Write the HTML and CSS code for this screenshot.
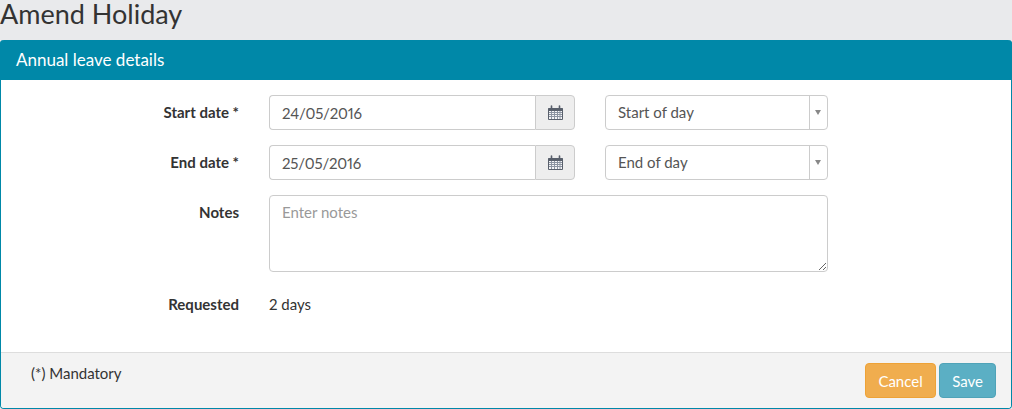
FILE: index.html
```html
<!DOCTYPE html>
<html lang="en">
  <head>
    <meta charset="UTF-8" />
    <meta name="viewport" content="width=device-width, initial-scale=1" />
    <title>Amend Holiday</title>
    <link rel="stylesheet" href="styles.css">
  </head>
  <body>
    <h1 class="page-title">Amend Holiday</h1>

    <main class="panel">
      <div class="panel-heading">Annual leave details</div>

      <form class="panel-body">
        <label class="form-label" for="start-date">Start date *</label>
        <div class="input-group">
          <input class="form-control" id="start-date" type="text" value="24/05/2016" />
          <span class="input-addon">
            <svg class="cal-icon" viewBox="0 0 15 15" aria-hidden="true">
              <path class="cal-body" d="M.5 3.5h14v11H.5z" />
              <path class="cal-grid" d="M1 7.5h13M1 9.5h13M1 11.5h13M3.5 6v8M6.5 6v8M9.5 6v8M12 6v8" />
              <path class="cal-top" d="M.5 3h14v3H.5z" />
              <path class="cal-ring" d="M3.5 1v3M11.5 1v3" />
            </svg>
          </span>
        </div>
        <div class="select-box">
          <span class="select-text">Start of day</span>
          <span class="select-arrow"></span>
        </div>

        <label class="form-label" for="end-date">End date *</label>
        <div class="input-group">
          <input class="form-control" id="end-date" type="text" value="25/05/2016" />
          <span class="input-addon">
            <svg class="cal-icon" viewBox="0 0 15 15" aria-hidden="true">
              <path class="cal-body" d="M.5 3.5h14v11H.5z" />
              <path class="cal-grid" d="M1 7.5h13M1 9.5h13M1 11.5h13M3.5 6v8M6.5 6v8M9.5 6v8M12 6v8" />
              <path class="cal-top" d="M.5 3h14v3H.5z" />
              <path class="cal-ring" d="M3.5 1v3M11.5 1v3" />
            </svg>
          </span>
        </div>
        <div class="select-box">
          <span class="select-text">End of day</span>
          <span class="select-arrow"></span>
        </div>

        <label class="form-label notes-label" for="notes">Notes</label>
        <textarea class="notes" id="notes" placeholder="Enter notes"></textarea>

        <span class="form-label requested-label">Requested</span>
        <span class="requested-value">2 days</span>
      </form>

      <footer class="panel-footer">
        <span class="mandatory">(*) Mandatory</span>
        <div class="actions">
          <button class="btn btn-cancel" type="button">Cancel</button>
          <button class="btn btn-save" type="button">Save</button>
        </div>
      </footer>
    </main>
  </body>
</html>
```

FILE: styles.css
```css
* {
  box-sizing: border-box;
}
html,
body {
  height: 100%;
}
body {
  margin: 0;
  overflow: hidden;
  display: flex;
  flex-direction: column;
  background: #e9eaec;
  color: #333;
  font-family: Lato, "Open Sans", sans-serif;
  font-size: 15px;
  line-height: 20px;
  font-variant-numeric: proportional-nums;
}
.page-title {
  margin: 0;
  height: 40px;
  font-size: 27px;
  font-weight: 400;
  line-height: 27px;
  color: #333;
}

/* Panel */
.panel {
  height: 369px;
  width: 1012px;
  display: flex;
  flex-direction: column;
  background: #fff;
  border: 1px solid #0088a8;
  border-top: 0;
  border-radius: 4px;
}
.panel-heading {
  height: 40px;
  margin: 0 -1px;
  padding: 10px 16px;
  background: #0088a8;
  color: #fff;
  font-size: 17px;
  border-radius: 4px 4px 0 0;
}
.panel-body {
  flex: 1;
  display: grid;
  grid-template-columns: 238px 306px 223px;
  grid-template-rows: 35px 35px 77px 20px;
  column-gap: 30px;
  row-gap: 15px;
  align-content: start;
  padding-top: 15px;
}
.form-label {
  text-align: right;
  font-weight: 700;
  padding-top: 7px;
  color: #333;
}
.requested-label {
  padding-top: 0;
  margin-top: 7px;
}
.requested-value {
  margin-top: 7px;
}

/* Inputs */
.input-group {
  display: flex;
}
.form-control {
  flex: 1;
  min-width: 0;
  height: 35px;
  padding: 6px 12px;
  border: 1px solid #ccc;
  border-right: 0;
  border-radius: 4px 0 0 4px;
  font: inherit;
  letter-spacing: -0.2px;
  color: #555;
}
.input-addon {
  width: 40px;
  height: 35px;
  display: flex;
  align-items: center;
  justify-content: center;
  background: #eee;
  border: 1px solid #ccc;
  border-radius: 0 4px 4px 0;
}
.cal-icon {
  width: 15px;
  height: 15px;
  fill: none;
}
.cal-body {
  fill: #f4f4f6;
  stroke: #59606c;
}
.cal-top {
  fill: #59606c;
}
.cal-grid {
  stroke: #8b93a0;
  stroke-width: 1;
}
.cal-ring {
  stroke: #59606c;
  stroke-width: 1.6;
  stroke-linecap: round;
}
.select-box {
  height: 35px;
  display: flex;
  border: 1px solid #ccc;
  border-radius: 4px;
  background: #fff;
  color: #555;
}
.select-text {
  flex: 1;
  padding: 6px 12px;
}
.select-arrow {
  width: 18px;
  border-left: 1px solid #ccc;
  position: relative;
}
.select-arrow::after {
  content: "";
  position: absolute;
  left: 5px;
  top: 14px;
  border-left: 3.5px solid transparent;
  border-right: 3.5px solid transparent;
  border-top: 5px solid #888;
}
.notes {
  grid-column: 2 / 4;
  width: 100%;
  height: 77px;
  padding: 6px 12px;
  border: 1px solid #ccc;
  border-radius: 4px;
  font: inherit;
  color: #555;
}
.notes::placeholder {
  color: #999;
  opacity: 1;
}

/* Footer */
.panel-footer {
  height: 56px;
  display: flex;
  justify-content: space-between;
  align-items: flex-start;
  padding: 10px 15px 0 30px;
  background: #f3f3f3;
  border-top: 1px solid #ddd;
  border-radius: 0 0 3px 3px;
}
.actions {
  display: flex;
  gap: 3px;
}
.btn {
  height: 35px;
  padding: 0 12.5px;
  border: 1px solid;
  border-radius: 4px;
  color: #fff;
  font: inherit;
}
.btn-cancel {
  background: #f0ad4e;
  border-color: #eea236;
}
.btn-save {
  padding: 0 12px;
  background: #5bafc4;
  border-color: #4fa3b8;
}
```
